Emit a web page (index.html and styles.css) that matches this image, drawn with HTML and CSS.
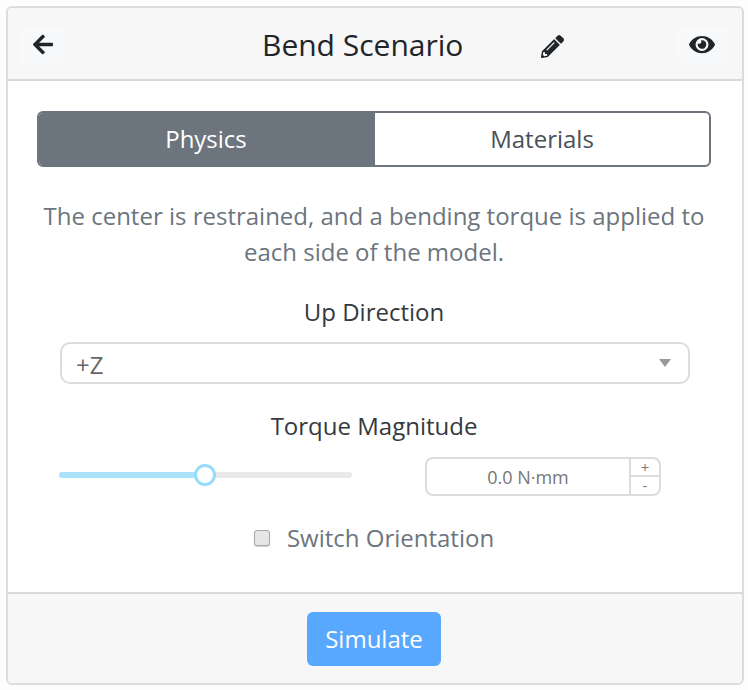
FILE: index.html
```html
<!DOCTYPE html>
<html lang="en">
<head>
<meta charset="utf-8">
<title>Bend Scenario</title>
<link rel="stylesheet" href="styles.css">
</head>
<body>
<div class="card">
  <header class="card-head">
    <button class="icon-btn back" type="button" aria-label="Back">
      <svg class="i-arrow" viewBox="0 0 448 512"><path d="M257.5 445.1l-22.2 22.2c-9.4 9.4-24.6 9.4-33.9 0L7 273c-9.4-9.4-9.4-24.6 0-33.9L201.4 44.7c9.4-9.4 24.6-9.4 33.9 0l22.2 22.2c9.5 9.5 9.3 25-.4 34.3L136.6 216H424c13.3 0 24 10.7 24 24v32c0 13.3-10.7 24-24 24H136.6l120.5 114.8c9.8 9.3 10 24.8.4 34.3z"/></svg>
    </button>
    <h1 class="title">Bend Scenario</h1>
    <svg class="i-pencil" viewBox="0 0 512 512"><path d="M497.9 142.1l-46.1 46.1c-4.7 4.7-12.3 4.7-17 0l-111-111c-4.7-4.7-4.7-12.3 0-17l46.1-46.1c18.7-18.7 49.1-18.7 67.9 0l60.1 60.1c18.8 18.7 18.8 49.1 0 67.9zM284.2 99.8L21.6 362.4.4 483.9c-2.9 16.4 11.4 30.6 27.8 27.8l121.5-21.3 262.6-262.6c4.7-4.7 4.7-12.3 0-17l-111-111c-4.8-4.7-12.4-4.7-17.1 0zM124.1 339.9c-5.5-5.5-5.5-14.3 0-19.8l154-154c5.5-5.5 14.3-5.5 19.8 0s5.5 14.3 0 19.8l-154 154c-5.5 5.5-14.3 5.5-19.8 0zM88 424h48v36.3l-64.5 11.3-31.1-31.1L51.7 376H88v48z"/></svg>
    <button class="icon-btn eye" type="button" aria-label="Preview">
      <svg class="i-eye" viewBox="0 0 576 512"><path d="M572.52 241.4C518.29 135.59 410.93 64 288 64S57.68 135.64 3.48 241.41a32.35 32.35 0 0 0 0 29.19C57.71 376.41 165.07 448 288 448s230.32-71.64 284.52-177.41a32.35 32.35 0 0 0 0-29.19zM288 400a144 144 0 1 1 144-144 143.93 143.93 0 0 1-144 144zm0-240a95.31 95.31 0 0 0-25.31 3.79 47.85 47.85 0 0 1-66.9 66.9A95.78 95.78 0 1 0 288 160z"/></svg>
    </button>
  </header>
  <main class="card-body">
    <div class="tabs">
      <div class="tab active">Physics</div>
      <div class="tab">Materials</div>
    </div>
    <p class="desc">The center is restrained, and a bending torque is applied to each side of the model.</p>
    <div class="label up-label">Up Direction</div>
    <div class="select">
      <span>+Z</span>
      <span class="caret"></span>
    </div>
    <div class="label torque-label">Torque Magnitude</div>
    <div class="torque-row">
      <div class="slider">
        <div class="slider-fill"></div>
        <div class="slider-thumb"></div>
      </div>
      <div class="number">
        <div class="number-value">0.0 N·mm</div>
        <div class="stepper">
          <div class="step">+</div>
          <div class="step step-minus">-</div>
        </div>
      </div>
    </div>
    <label class="check">
      <span class="check-box"></span>
      <span>Switch Orientation</span>
    </label>
  </main>
  <footer class="card-foot">
    <button class="simulate" type="button">Simulate</button>
  </footer>
</div>
</body>
</html>
```
FILE: styles.css
```css
* { box-sizing: border-box; }
html, body { margin: 0; height: 100%; }
body {
  padding: 6px 0 0 6px;
  background: #fdfdfd;
  font-family: "Open Sans", sans-serif;
  color: #212529;
}
.card {
  width: 738px;
  height: 679px;
  display: flex;
  flex-direction: column;
  background: #fff;
  border: 2px solid #dcdcdc;
  border-radius: 6px;
  overflow: hidden;
}
.card-head {
  height: 73px;
  flex: none;
  display: flex;
  align-items: center;
  padding: 2px 15px 0 12px;
  background: #f7f7f7;
  border-bottom: 2px solid #d9d9d9;
}
.icon-btn {
  width: 45px;
  height: 36px;
  padding: 0;
  border: 0;
  border-radius: 6px;
  background: #f8f9fa;
  display: flex;
  align-items: center;
  justify-content: center;
}
.icon-btn svg, .i-pencil { fill: #212529; display: block; }
.i-arrow { width: 20px; height: 23px; }
.i-eye { width: 26px; height: 23px; }
.i-pencil { width: 23px; height: 23px; margin: 3px 0 0 78px; }
.eye { margin-left: auto; width: 50px; }
.title {
  margin: 0 0 0 197px;
  font-size: 30px;
  font-weight: 400;
  line-height: 36px;
  white-space: nowrap;
}
.card-body {
  flex: 1;
  padding: 30px 32px 0 29px;
  display: flex;
  flex-direction: column;
}
.tabs {
  display: flex;
  width: 674px;
  height: 56px;
  border: 2px solid #6c757d;
  border-radius: 6px;
  overflow: hidden;
}
.tab {
  width: 334px;
  display: flex;
  align-items: center;
  justify-content: center;
  padding-bottom: 2px;
  font-size: 24px;
  color: #495057;
}
.tab.active { width: 336px; padding-right: 2px; background: #6c757d; color: #fff; }
.desc {
  margin: 31px 0 0;
  width: 674px;
  text-align: center;
  font-size: 24px;
  line-height: 36px;
  color: #6c757d;
}
.label {
  width: 674px;
  text-align: center;
  font-size: 24px;
  line-height: 36px;
  color: #343a40;
}
.up-label { margin-top: 24px; }
.select {
  margin: 12px 0 0 23px;
  width: 630px;
  height: 42px;
  display: flex;
  align-items: center;
  justify-content: space-between;
  padding: 3px 17px 0 14px;
  border: 2px solid #dcdcdc;
  border-radius: 10px;
  font-size: 24px;
  color: #666;
}
.caret {
  width: 0;
  height: 0;
  margin-top: -3px;
  border-left: 6px solid transparent;
  border-right: 6px solid transparent;
  border-top: 8px solid #999;
}
.torque-label { margin-top: 24px; }
.torque-row {
  margin: 13px 0 0 22px;
  display: flex;
  align-items: center;
  height: 39px;
}
.slider {
  position: relative;
  width: 293px;
  height: 6px;
  margin-bottom: 4px;
  background: #e9e9e9;
  border-radius: 3px;
}
.slider-fill {
  position: absolute;
  left: 0;
  top: 0;
  bottom: 0;
  width: 146px;
  background: #abe2fb;
  border-radius: 3px;
}
.slider-thumb {
  position: absolute;
  left: 135px;
  top: -8px;
  width: 22px;
  height: 22px;
  background: #fff;
  border: 3px solid #96dbfa;
  border-radius: 50%;
}
.number {
  margin-left: 73px;
  width: 236px;
  height: 39px;
  display: flex;
  border: 2px solid #dcdcdc;
  border-radius: 8px;
  overflow: hidden;
}
.number-value {
  flex: 1;
  display: flex;
  align-items: center;
  justify-content: center;
  font-size: 18px;
  color: #777;
}
.stepper {
  width: 30px;
  display: flex;
  flex-direction: column;
  border-left: 2px solid #dcdcdc;
}
.step {
  height: 16px;
  display: flex;
  align-items: center;
  justify-content: center;
  font-size: 15px;
  line-height: 15px;
  color: #777;
}
.step-minus { height: 19px; border-top: 2px solid #dcdcdc; }
.check {
  margin-top: 24px;
  width: 674px;
  display: flex;
  align-items: center;
  justify-content: center;
  gap: 17px;
  font-size: 24px;
  line-height: 36px;
  color: #6c757d;
}
.check-box {
  width: 16px;
  height: 16px;
  background: #e6e6e6;
  border: 1.5px solid #a8a8a8;
  border-radius: 3px;
  box-shadow: 0 1px 1px rgba(0,0,0,.2);
}
.card-foot {
  height: 91px;
  flex: none;
  display: flex;
  align-items: center;
  justify-content: center;
  background: #f7f7f7;
  border-top: 2px solid #d9d9d9;
  padding: 1px 2px 0 0;
}
.simulate {
  width: 134px;
  height: 54px;
  padding: 0 0 2px;
  border: 0;
  border-radius: 6px;
  background: #58a8ff;
  color: #fff;
  font-family: "Open Sans", sans-serif;
  font-size: 24px;
}
```
